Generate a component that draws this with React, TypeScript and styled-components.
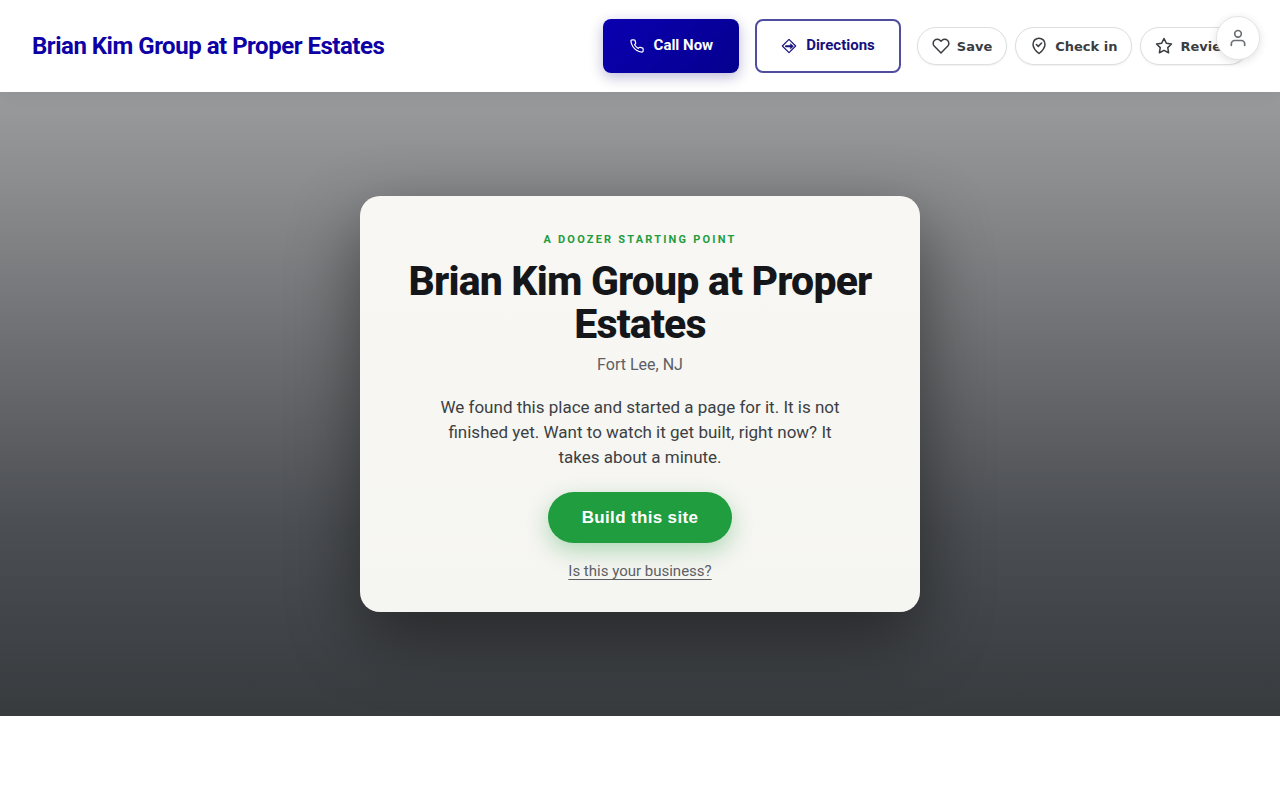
import React from "react";
import styled, { createGlobalStyle, css } from "styled-components";

const GlobalStyle = createGlobalStyle`
  *, *::before, *::after { box-sizing: border-box; }
  body {
    margin: 0;
    background: #fff;
    font-family: Roboto, "Liberation Sans", sans-serif;
    -webkit-font-smoothing: antialiased;
  }
`;

const Header = styled.header`
  position: relative;
  z-index: 1;
  display: flex;
  align-items: center;
  justify-content: space-between;
  gap: 16px;
  min-height: 92px;
  padding: 16px 32px;
  background: #fff;
  box-shadow: 0 2px 16px rgba(0, 0, 0, 0.08);
`;

const Brand = styled.a`
  color: #0d00a4;
  font-size: 24px;
  font-weight: 700;
  line-height: 32px;
  letter-spacing: -0.02em;
  text-decoration: none;
  white-space: nowrap;
`;

const Actions = styled.nav`
  display: flex;
  align-items: center;
  gap: 16px;
`;

const PillGroup = styled.div`
  display: flex;
  gap: 8px;
`;

const ActionLink = styled.a<{ $primary?: boolean }>`
  display: flex;
  align-items: center;
  gap: 9px;
  height: 54px;
  padding: 0 24px;
  border: 2px solid rgba(13, 8, 120, 0.72);
  border-radius: 8px;
  color: #16107c;
  font-size: 15px;
  font-weight: 700;
  line-height: 24px;
  text-decoration: none;
  white-space: nowrap;
  ${(p) =>
    p.$primary &&
    css`
      padding: 0 26px;
      border: 0;
      color: #fff;
      background: linear-gradient(135deg, #0a00b0, #06008e);
      box-shadow: 0 4px 14px rgba(13, 0, 110, 0.28);
    `}
  span { padding-bottom: 2px; }
`;

const Pill = styled.button`
  display: flex;
  align-items: center;
  gap: 7px;
  height: 38px;
  padding: 0 14px;
  border: 1px solid #dcdee1;
  border-radius: 19px;
  background: #fff;
  box-shadow: 0 1px 2px rgba(0, 0, 0, 0.06);
  color: #3a3d42;
  font-family: "DejaVu Sans", sans-serif;
  font-size: 13px;
  font-weight: 700;
  white-space: nowrap;
`;

const AccountButton = styled.button`
  position: fixed;
  z-index: 2;
  top: 16px;
  right: 20px;
  display: grid;
  place-items: center;
  width: 44px;
  height: 44px;
  padding: 0;
  border: 1px solid #e2e3e5;
  border-radius: 50%;
  background: #fff;
  color: #6b6e73;
  box-shadow: 0 2px 8px rgba(0, 0, 0, 0.12);
`;

const Hero = styled.main`
  display: grid;
  place-items: center;
  min-height: 78vh;
  padding: 32px 24px;
  overflow: hidden;
  background: linear-gradient(
    180deg,
    #9a9b9d 0%,
    #8b8c8e 15%,
    #6e6f72 40%,
    #4b4e52 70%,
    #383b3e 100%
  );
`;

const Card = styled.section`
  display: flex;
  flex-direction: column;
  align-items: center;
  width: 100%;
  max-width: 560px;
  padding: 35px 40px 29px;
  border-radius: 20px;
  background: linear-gradient(180deg, #f8f7f3, #f5f5f1);
  box-shadow: 0 24px 70px rgba(0, 0, 0, 0.45);
  text-align: center;
`;

const Eyebrow = styled.p`
  margin: 0 0 11px;
  color: #1f9d3f;
  font-size: 11px;
  font-weight: 700;
  line-height: 18px;
  letter-spacing: 0.2em;
  text-transform: uppercase;
`;

const Title = styled.h1`
  margin: 0 0 7px;
  color: #14161a;
  font-size: 41px;
  font-weight: 800;
  line-height: 43px;
  letter-spacing: -0.02em;
`;

const Place = styled.p`
  margin: 0 0 18px;
  color: #5c5f64;
  font-size: 16px;
  line-height: 24px;
`;

const Lead = styled.p`
  max-width: 420px;
  margin: 0 0 22px;
  color: #3c3f44;
  font-size: 17px;
  line-height: 25px;
`;

const BuildButton = styled.button`
  height: 51px;
  padding: 0 34px;
  border: 0;
  border-radius: 26px;
  background: #1f9d3f;
  box-shadow: 0 8px 22px rgba(31, 157, 63, 0.32);
  color: #fff;
  font-family: "Liberation Sans", Arial, sans-serif;
  font-size: 17px;
  font-weight: 700;
  letter-spacing: 0.02em;
`;

const ClaimLink = styled.a`
  margin-top: 16px;
  color: #5c5f64;
  font-size: 15px;
  line-height: 24px;
  text-decoration: underline;
  text-underline-offset: 3px;
`;

type IconProps = {
  size: number;
  width: number;
  viewBox?: string;
  children: React.ReactNode;
};

const Icon = ({ size, width, viewBox = "0 0 24 24", children }: IconProps) => (
  <svg
    width={size}
    height={size}
    viewBox={viewBox}
    fill="none"
    stroke="currentColor"
    strokeWidth={width}
    strokeLinecap="round"
    strokeLinejoin="round"
    aria-hidden="true"
  >
    {children}
  </svg>
);

export default function App() {
  return (
    <>
      <GlobalStyle />
      <Header>
        <Brand href="#">Brian Kim Group at Proper Estates</Brand>
        <Actions>
          <ActionLink $primary href="#call">
            <Icon size={16} width={2} viewBox="-1 -1 26 26">
              <path d="M22 16.920v3a2 2 0 0 1-2.180 2 19.790 19.790 0 0 1-8.630-3.070 19.500 19.500 0 0 1-6-6 19.790 19.790 0 0 1-3.070-8.670A2 2 0 0 1 4.110 2h3a2 2 0 0 1 2 1.720 12.840 12.840 0 0 0 .7 2.810 2 2 0 0 1-.45 2.110L8.090 9.910a16 16 0 0 0 6 6l1.270-1.270a2 2 0 0 1 2.110-.45 12.840 12.840 0 0 0 2.810.7A2 2 0 0 1 22 16.920z" />
            </Icon>
            <span>Call Now</span>
          </ActionLink>
          <ActionLink href="#directions">
            <Icon size={16} width={1.7}>
              <path d="M12 2 22 12 12 22 2 12Z" />
              <path d="M7.500 12.500H16" strokeWidth="3" />
              <path d="m14.500 9 4 3.500-4 3.500Z" fill="currentColor" strokeWidth="1" />
            </Icon>
            <span>Directions</span>
          </ActionLink>
          <PillGroup>
            <Pill type="button">
              <Icon size={18} width={2}>
                <path d="M20.840 4.610a5.500 5.500 0 0 0-7.780 0L12 5.670l-1.060-1.060a5.500 5.500 0 0 0-7.780 7.780l1.060 1.060L12 21.230l7.780-7.780 1.060-1.060a5.500 5.500 0 0 0 0-7.780z" />
              </Icon>
              Save
            </Pill>
            <Pill type="button">
              <Icon size={18} width={2}>
                <path d="M12 22s8-6.500 8-12.500a8 8 0 0 0-16 0C4 15.500 12 22 12 22z" />
                <path d="m8.500 10 2.500 2.500 4.500-4.500" />
              </Icon>
              Check in
            </Pill>
            <Pill type="button">
              <Icon size={18} width={2}>
                <path d="m12 2 3.090 6.260L22 9.270l-5 4.870 1.180 6.880L12 17.770l-6.180 3.250L7 14.140 2 9.270l6.910-1.010L12 2z" />
              </Icon>
              Review
            </Pill>
          </PillGroup>
        </Actions>
      </Header>
      <AccountButton type="button" aria-label="Account">
        <Icon size={20} width={2}>
          <path d="M20 21v-2a4 4 0 0 0-4-4H8a4 4 0 0 0-4 4v2" />
          <circle cx="12" cy="7" r="4" />
        </Icon>
      </AccountButton>
      <Hero>
        <Card>
          <Eyebrow>A Doozer starting point</Eyebrow>
          <Title>Brian Kim Group at Proper Estates</Title>
          <Place>Fort Lee, NJ</Place>
          <Lead>
            We found this place and started a page for it. It is not finished
            yet. Want to watch it get built, right now? It takes about a minute.
          </Lead>
          <BuildButton type="button">Build this site</BuildButton>
          <ClaimLink href="#claim">Is this your business?</ClaimLink>
        </Card>
      </Hero>
    </>
  );
}
